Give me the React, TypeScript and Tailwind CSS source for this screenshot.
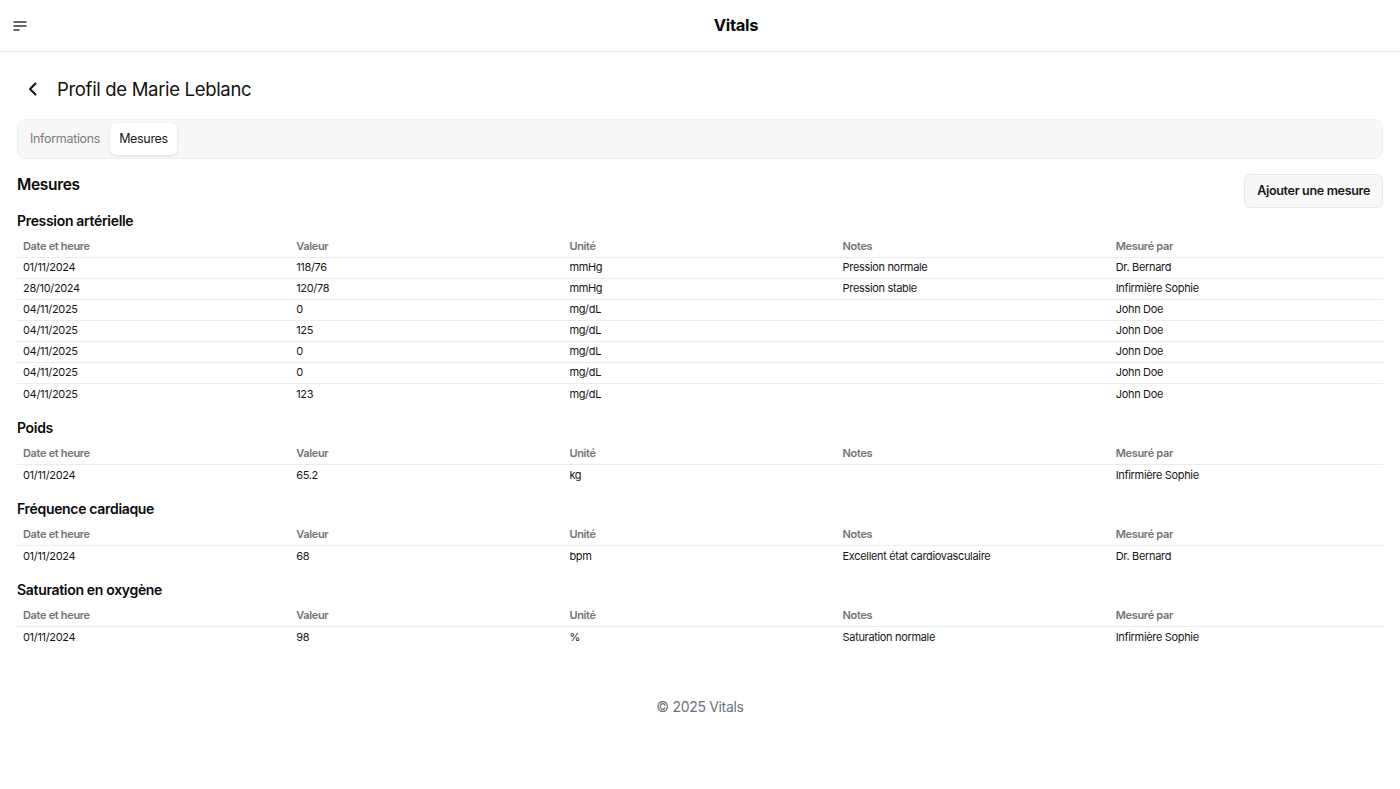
import React from "react";

type Row = { date: string; value: string; unit: string; notes: string; by: string };

const sections: { title: string; rows: Row[] }[] = [
  {
    title: "Pression artérielle",
    rows: [
      { date: "01/11/2024", value: "118/76", unit: "mmHg", notes: "Pression normale", by: "Dr. Bernard" },
      { date: "28/10/2024", value: "120/78", unit: "mmHg", notes: "Pression stable", by: "Infirmière Sophie" },
      { date: "04/11/2025", value: "0", unit: "mg/dL", notes: "", by: "John Doe" },
      { date: "04/11/2025", value: "125", unit: "mg/dL", notes: "", by: "John Doe" },
      { date: "04/11/2025", value: "0", unit: "mg/dL", notes: "", by: "John Doe" },
      { date: "04/11/2025", value: "0", unit: "mg/dL", notes: "", by: "John Doe" },
      { date: "04/11/2025", value: "123", unit: "mg/dL", notes: "", by: "John Doe" },
    ],
  },
  {
    title: "Poids",
    rows: [{ date: "01/11/2024", value: "65.2", unit: "kg", notes: "", by: "Infirmière Sophie" }],
  },
  {
    title: "Fréquence cardiaque",
    rows: [{ date: "01/11/2024", value: "68", unit: "bpm", notes: "Excellent état cardiovasculaire", by: "Dr. Bernard" }],
  },
  {
    title: "Saturation en oxygène",
    rows: [{ date: "01/11/2024", value: "98", unit: "%", notes: "Saturation normale", by: "Infirmière Sophie" }],
  },
];

function MeasureTable({ rows }: { rows: Row[] }) {
  return (
    <table className="w-full table-fixed text-[11px] tracking-[-0.03em]">
      <thead>
        <tr className="text-left text-[#737373]">
          <th className="h-[21px] pl-[6px] font-semibold">Date et heure</th>
          <th className="h-[21px] pl-[6px] font-semibold">Valeur</th>
          <th className="h-[21px] pl-[6px] font-semibold">Unité</th>
          <th className="h-[21px] pl-[6px] font-semibold">Notes</th>
          <th className="h-[21px] pl-[6px] font-semibold">Mesuré par</th>
        </tr>
      </thead>
      <tbody className="text-[#171717]">
        {rows.map((r, i) => (
          <tr key={i} className="border-t border-[#ececec]">
            <td className="h-[21px] pl-[6px]">{r.date}</td>
            <td className="h-[21px] pl-[6px]">{r.value}</td>
            <td className="h-[21px] pl-[6px]">{r.unit}</td>
            <td className="h-[21px] pl-[6px]">{r.notes}</td>
            <td className="h-[21px] pl-[6px]">{r.by}</td>
          </tr>
        ))}
      </tbody>
    </table>
  );
}

export default function App() {
  return (
    <div className="min-h-screen bg-white text-[#0a0a0a] font-['Inter',sans-serif] tracking-[-0.02em]">
      <header className="flex h-[52px] items-center border-b border-[#e5e5e5]">
        <div className="w-[72px] pl-[13px]">
          <svg width="14" height="12" viewBox="0 0 14 12" fill="none" stroke="#333" strokeWidth="1.5" strokeLinecap="round">
            <path d="M1 2h12M1 6h12M1 10h5" />
          </svg>
        </div>
        <div className="flex-1 text-center text-[16.5px] font-bold">Vitals</div>
      </header>

      <main className="px-[17px] pt-[23px]">
        <div className="flex items-center gap-[16px] pl-[8px] h-[28px]">
          <svg width="16" height="16" viewBox="0 0 16 16" fill="none" stroke="#111" strokeWidth="2" strokeLinecap="round" strokeLinejoin="round">
            <path d="M10.5 2.5 5 8l5.5 5.5" />
          </svg>
          <h1 className="text-[18.5px] leading-none text-[#111]">Profil de Marie Leblanc</h1>
        </div>

        <div className="mt-[16px] flex h-[40px] items-center gap-[1px] rounded-[8px] border border-[#f0f0f0] bg-[#f8f8f8] px-[3px]">
          <div className="px-[9px] py-[7px] text-[12.5px] text-[#7a7a7a]">Informations</div>
          <div className="rounded-[6px] bg-white px-[9px] py-[7px] text-[12.5px] text-[#171717] shadow-[0_1px_3px_rgba(0,0,0,0.12)]">
            Mesures
          </div>
        </div>

        <div className="mt-[16px] flex items-start justify-between">
          <h2 className="pt-[1px] text-[15.5px] font-semibold leading-[18px]">Mesures</h2>
          <button className="mt-[-1px] h-[34px] rounded-[6px] border border-[#e8e8e8] bg-[#f8f8f8] px-[12px] text-[12.5px] font-semibold text-[#171717]">
            Ajouter une mesure
          </button>
        </div>

        <div className="mt-[3px] flex flex-col gap-[14px]">
          {sections.map((s) => (
            <section key={s.title}>
              <h3 className="mb-[5px] text-[14px] font-semibold leading-[20px]">{s.title}</h3>
              <MeasureTable rows={s.rows} />
            </section>
          ))}
        </div>
      </main>

      <footer className="mt-[49px] text-center text-[14px] text-[#6b7280]">© 2025 Vitals</footer>
    </div>
  );
}
